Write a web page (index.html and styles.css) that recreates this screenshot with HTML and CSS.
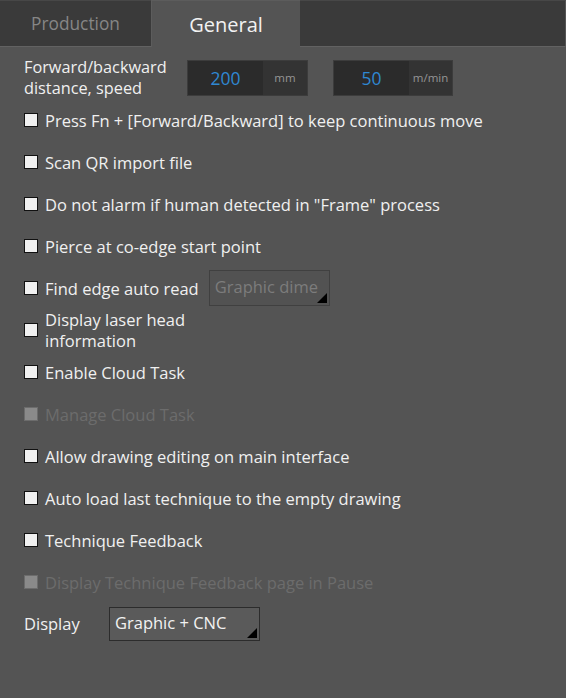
FILE: index.html
```html
<!DOCTYPE html>
<html>
<head>
<meta charset="utf-8">
<link rel="stylesheet" href="styles.css">
</head>
<body>
<div class="panel">
  <div class="tabs">
    <div class="tab">Production</div>
    <div class="tab active">General</div>
    <div class="tab-fill"></div>
  </div>
  <div class="content">
    <div class="row first">
      <div class="label-two">Forward/backward<br>distance, speed</div>
      <div class="field f1"><span class="val">200</span><span class="unit">mm</span></div>
      <div class="field f2"><span class="val">50</span><span class="unit">m/min</span></div>
    </div>
    <div class="row"><span class="cb"></span><span class="txt">Press Fn + [Forward/Backward] to keep continuous move</span></div>
    <div class="row"><span class="cb"></span><span class="txt">Scan QR import file</span></div>
    <div class="row"><span class="cb"></span><span class="txt">Do not alarm if human detected in "Frame" process</span></div>
    <div class="row"><span class="cb"></span><span class="txt">Pierce at co-edge start point</span></div>
    <div class="row"><span class="cb"></span><span class="txt">Find edge auto read</span><div class="combo disabled small"><span class="ctext">Graphic dime</span><span class="tri"></span></div></div>
    <div class="row"><span class="cb"></span><span class="txt two">Display laser head<br>information</span></div>
    <div class="row"><span class="cb"></span><span class="txt">Enable Cloud Task</span></div>
    <div class="row dis"><span class="cb"></span><span class="txt">Manage Cloud Task</span></div>
    <div class="row"><span class="cb"></span><span class="txt">Allow drawing editing on main interface</span></div>
    <div class="row"><span class="cb"></span><span class="txt">Auto load last technique to the empty drawing</span></div>
    <div class="row"><span class="cb"></span><span class="txt">Technique Feedback</span></div>
    <div class="row dis"><span class="cb"></span><span class="txt">Display Technique Feedback page in Pause</span></div>
    <div class="row display"><span class="dlabel">Display</span><div class="combo main"><span class="ctext">Graphic + CNC</span><span class="tri"></span></div></div>
  </div>
</div>
</body>
</html>
```
FILE: styles.css
```css
html, body {
  margin: 0;
  padding: 0;
  background: #545454;
}
body {
  font-family: "Open Sans", "Noto Sans", sans-serif;
  color: #f0f0f0;
  width: 566px;
  height: 698px;
  overflow: hidden;
}
.tabs {
  display: flex;
  height: 47px;
}
.tab {
  width: 151px;
  background: #3a3a3a;
  border-top: 1px solid #474747;
  box-sizing: border-box;
  border-bottom: 1px solid #626262;
  height: 47px;
  display: flex;
  align-items: center;
  justify-content: center;
  color: #868686;
  font-size: 17.3px;
}
.tab.active {
  width: 149px;
  background: #545454;
  color: #f2f2f2;
  font-size: 20px;
  border-bottom: none;
  border-left: 1px solid #5c5c5c;
  border-top: 1px solid #5c5c5c;
}
.tab-fill {
  flex: 1;
  background: #3a3a3a;
  border-top: 1px solid #474747;
  border-bottom: 1px solid #626262;
  border-right: 1px solid #555;
}
.content {
  padding: 9px 0 0 24px;
  display: flex;
  flex-direction: column;
}
.row {
  height: 42px;
  display: flex;
  align-items: center;
  font-size: 16.5px;
}
.row.first {
  height: 43px;
}
.label-two {
  width: 163px;
  line-height: 21px;
  font-size: 16.3px;
}
.field {
  display: flex;
  height: 36px;
  box-sizing: border-box;
  border: 1px solid #3c3c3c;
  background: #2b2b2b;
}
.f1 { width: 121px; }
.f2 { width: 120px; margin-left: 25px; }
.val {
  display: flex;
  align-items: center;
  justify-content: center;
  color: #2f88d2;
  font-size: 17.5px;
  flex: 0 0 75px;
}
.unit {
  flex: 1;
  background: #333333;
  display: flex;
  align-items: center;
  justify-content: center;
  color: #959595;
  font-size: 11.5px;
}
.cb {
  width: 14px;
  height: 14px;
  box-sizing: border-box;
  border: 1px solid #111;
  background: #f0f0f0;
  margin-right: 7px;
  flex: none;
}
.txt.two {
  line-height: 21px;
}
.row.dis .cb {
  background: #8a8a8a;
  border-color: #6c6c6c;
}
.row.dis .txt {
  color: #6c6c6c;
}
.combo {
  position: relative;
  box-sizing: border-box;
  display: flex;
  align-items: center;
  overflow: hidden;
  white-space: nowrap;
}
.combo.small {
  width: 121px;
  height: 36px;
  margin-left: 10px;
  border: 1px solid #404040;
  background: #525252;
  color: #7c7c7c;
  padding-left: 5px;
}
.combo.main {
  width: 151px;
  height: 34px;
  border: 1px solid #2c2c2c;
  background: #5a5a5a;
  color: #f2f2f2;
  padding-left: 5px;
  margin-top: 0;
}
.ctext {
  margin-top: -4px;
}
.tri {
  position: absolute;
  right: 2px;
  bottom: 2px;
  width: 0;
  height: 0;
  border-left: 10px solid transparent;
  border-bottom: 10px solid #000;
}
.dlabel {
  width: 85px;
  margin-top: -1px;
}
```
